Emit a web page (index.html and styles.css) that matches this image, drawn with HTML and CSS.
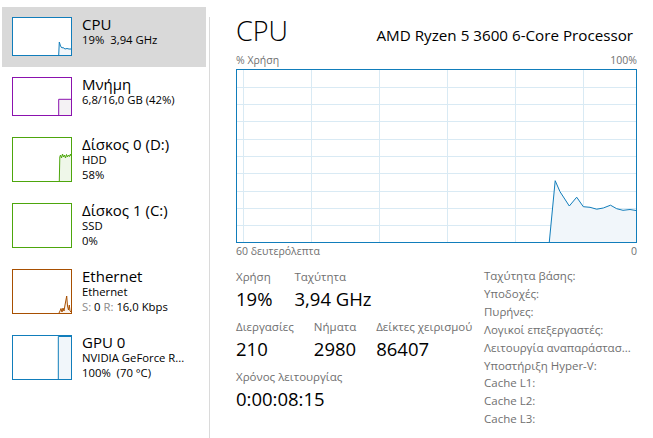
FILE: index.html
```html
<!DOCTYPE html>
<html lang="el">
<head>
<meta charset="utf-8">
<title>Διαχείριση εργασιών - CPU</title>
<link rel="stylesheet" href="styles.css">
</head>
<body>
<div class="app">
  <nav class="sidebar">
    <div class="item selected">
      <div class="thumb cpu">
        <svg viewBox="0 0 58 37" preserveAspectRatio="none">
          <polygon class="fill" points="45.7,37 46.3,24 47.5,28 49,30 50,29.5 52,31 54,30.5 56,31 58,31 58,37"/>
          <polyline class="line" points="45.7,37 46.3,24 47.5,28 49,30 50,29.5 52,31 54,30.5 56,31 58,31"/>
        </svg>
      </div>
      <div class="info">
        <div class="title">CPU</div>
        <div class="sub">19%<span class="sp"></span>3,94 GHz</div>
      </div>
    </div>
    <div class="item">
      <div class="thumb mem">
        <svg viewBox="0 0 58 37" preserveAspectRatio="none">
          <polygon class="fill" points="45.7,37 45.7,21.3 58,21.3 58,37"/>
          <polyline class="line" points="45.7,37 45.7,21.3 58,21.3"/>
        </svg>
      </div>
      <div class="info">
        <div class="title">Μνήμη</div>
        <div class="sub">6,8/16,0 GB (42%)</div>
      </div>
    </div>
    <div class="item">
      <div class="thumb disk">
        <svg viewBox="0 0 58 43" preserveAspectRatio="none">
          <polygon class="fill" points="46.3,43 46.8,19 47.5,17 48.5,20 49.5,16 50.5,19 51.5,17 52.5,20 53.5,16.5 54.5,19 55.5,17 56.5,18.5 57.5,16 58,18 58,43"/>
          <polyline class="line" points="46.3,43 46.8,19 47.5,17 48.5,20 49.5,16 50.5,19 51.5,17 52.5,20 53.5,16.5 54.5,19 55.5,17 56.5,18.5 57.5,16 58,18"/>
        </svg>
      </div>
      <div class="info">
        <div class="title">Δίσκος 0 (D:)</div>
        <div class="sub">HDD</div>
        <div class="sub">58%</div>
      </div>
    </div>
    <div class="item">
      <div class="thumb disk"></div>
      <div class="info">
        <div class="title">Δίσκος 1 (C:)</div>
        <div class="sub">SSD</div>
        <div class="sub">0%</div>
      </div>
    </div>
    <div class="item">
      <div class="thumb eth">
        <svg viewBox="0 0 58 43" preserveAspectRatio="none">
          <polygon class="fill" points="46,43 47,41 48,38.5 49,42 50,38 51,41 52,35 53.7,26 54.5,36 55.5,40 56.3,35 57,41 58,42 58,43"/>
          <polyline class="line" points="46,43 47,41 48,38.5 49,42 50,38 51,41 52,35 53.7,26 54.5,36 55.5,40 56.3,35 57,41 58,42"/>
        </svg>
      </div>
      <div class="info">
        <div class="title">Ethernet</div>
        <div class="sub">Ethernet</div>
        <div class="sub"><span class="dim">S:</span> 0 <span class="dim">R:</span> 16,0 Kbps</div>
      </div>
    </div>
    <div class="item">
      <div class="thumb gpu">
        <svg viewBox="0 0 58 43" preserveAspectRatio="none">
          <polygon class="fill" points="45.3,43 45.3,0.5 58,0.5 58,43"/>
          <polyline class="line" points="45.3,43 45.3,0.5 58,0.5"/>
        </svg>
      </div>
      <div class="info">
        <div class="title">GPU 0</div>
        <div class="sub">NVIDIA GeForce R...</div>
        <div class="sub">100%&nbsp; (70 °C)</div>
      </div>
    </div>
  </nav>
  <div class="divider"></div>
  <main class="main">
    <header class="head">
      <h1 class="big">CPU</h1>
      <div class="model">AMD Ryzen 5 3600 6-Core Processor</div>
    </header>
    <div class="axis top"><span>% Χρήση</span><span>100%</span></div>
    <div class="graph">
      <svg viewBox="0 0 399 172" preserveAspectRatio="none">
        <g class="grid">
          <line x1="6.5" y1="0" x2="6.5" y2="172"/>
          <line x1="74.5" y1="0" x2="74.5" y2="172"/>
          <line x1="142.5" y1="0" x2="142.5" y2="172"/>
          <line x1="210.5" y1="0" x2="210.5" y2="172"/>
          <line x1="278.5" y1="0" x2="278.5" y2="172"/>
          <line x1="346.5" y1="0" x2="346.5" y2="172"/>
          <line x1="0" y1="17.5" x2="399" y2="17.5"/>
          <line x1="0" y1="34.5" x2="399" y2="34.5"/>
          <line x1="0" y1="51.5" x2="399" y2="51.5"/>
          <line x1="0" y1="69.5" x2="399" y2="69.5"/>
          <line x1="0" y1="86.5" x2="399" y2="86.5"/>
          <line x1="0" y1="103.5" x2="399" y2="103.5"/>
          <line x1="0" y1="121.5" x2="399" y2="121.5"/>
          <line x1="0" y1="138.5" x2="399" y2="138.5"/>
          <line x1="0" y1="155.5" x2="399" y2="155.5"/>
        </g>
        <polygon class="fill" points="312.3,172 318.2,110.7 323,121.7 332.3,136 339.7,127.2 346.3,136.7 353,137.3 359.7,139.2 366.3,138 373.5,135.2 379.7,138.7 386,140.3 393,139.5 399,140.5 399,172"/>
        <polyline class="line" points="312.3,172 318.2,110.7 323,121.7 332.3,136 339.7,127.2 346.3,136.7 353,137.3 359.7,139.2 366.3,138 373.5,135.2 379.7,138.7 386,140.3 393,139.5 399,140.5"/>
      </svg>
    </div>
    <div class="axis bottom"><span>60 δευτερόλεπτα</span><span>0</span></div>
    <section class="stats">
      <div class="dyn">
        <div class="row">
          <div class="stat"><div class="lbl">Χρήση</div><div class="val">19%</div></div>
          <div class="stat"><div class="lbl">Ταχύτητα</div><div class="val">3,94 GHz</div></div>
        </div>
        <div class="row">
          <div class="stat"><div class="lbl">Διεργασίες</div><div class="val">210</div></div>
          <div class="stat"><div class="lbl">Νήματα</div><div class="val">2980</div></div>
          <div class="stat"><div class="lbl">Δείκτες χειρισμού</div><div class="val">86407</div></div>
        </div>
        <div class="row">
          <div class="stat"><div class="lbl">Χρόνος λειτουργίας</div><div class="val">0:00:08:15</div></div>
        </div>
      </div>
      <ul class="specs">
        <li>Ταχύτητα βάσης:</li>
        <li>Υποδοχές:</li>
        <li>Πυρήνες:</li>
        <li>Λογικοί επεξεργαστές:</li>
        <li>Λειτουργία αναπαράστασ...</li>
        <li>Υποστήριξη Hyper-V:</li>
        <li>Cache L1:</li>
        <li>Cache L2:</li>
        <li>Cache L3:</li>
      </ul>
    </section>
  </main>
</div>
</body>
</html>
```
FILE: styles.css
```css
html, body {
  margin: 0;
  padding: 0;
  background: #ffffff;
}
body {
  font-family: "Open Sans", "Noto Sans", "DejaVu Sans", sans-serif;
  color: #000;
  width: 653px;
  height: 438px;
  overflow: hidden;
}
.app {
  display: flex;
  height: 438px;
}
.sidebar {
  width: 204px;
  padding: 7px 0 0 2px;
  flex: none;
}
.divider {
  flex: none;
  width: 1px;
  margin: 17px 0 0 3px;
  background: #dadada;
}
.item {
  display: flex;
  align-items: stretch;
  padding: 10px 0 11px 10px;
  gap: 10px;
}
.item.selected {
  background: #d9d9d9;
}
.thumb {
  flex: none;
  width: 58px;
  min-height: 37px;
  border: 1px solid;
  background: #fff;
  position: relative;
}
.thumb svg {
  position: absolute;
  left: 0;
  top: 0;
  width: 100%;
  height: 100%;
  display: block;
}
.thumb .line { fill: none; stroke-width: 1; }
.thumb.cpu, .thumb.gpu { border-color: #117dbb; }
.thumb.cpu .line, .thumb.gpu .line { stroke: #117dbb; }
.thumb.cpu .fill, .thumb.gpu .fill { fill: #f1f6fa; }
.thumb.mem { border-color: #8b12ae; }
.thumb.mem .line { stroke: #8b12ae; }
.thumb.mem .fill { fill: #f4f2f4; }
.thumb.disk { border-color: #4da60c; }
.thumb.disk .line { stroke: #4da60c; }
.thumb.disk .fill { fill: #eff7e9; }
.thumb.eth { border-color: #a74f01; }
.thumb.eth .line { stroke: #a74f01; }
.thumb.eth .fill { fill: #fcf3eb; }

.info {
  white-space: nowrap;
}
.title {
  font-size: 15px;
  line-height: 15px;
}
.sub {
  font-size: 11.3px;
  line-height: 15px;
}
.sp { display: inline-block; width: 6px; }
.dim { color: #8a8a8a; }

.main {
  flex: 1;
  padding: 14px 16px 0 26px;
}
.head {
  display: flex;
  justify-content: space-between;
  align-items: baseline;
  padding-right: 4px;
  height: 34px;
}
.big {
  margin: 0;
  font-size: 27px;
  font-weight: 300;
  line-height: 34px;
}
.model {
  font-size: 15.2px;
}
.axis {
  display: flex;
  justify-content: space-between;
  font-size: 10.5px;
  line-height: 13px;
  color: #707070;
}
.axis.top { margin-top: 6px; margin-bottom: 2px; }
.axis.bottom { margin-top: 2px; }
.graph {
  height: 172px;
  border: 1px solid #117dbb;
}
.graph svg {
  display: block;
  width: 100%;
  height: 100%;
}
.graph .grid line { stroke: #d9eaf4; stroke-width: 1; }
.graph .fill { fill: #f1f6fa; }
.graph .line { fill: none; stroke: #117dbb; stroke-width: 1; }

.stats {
  display: flex;
  margin-top: 11px;
}
.dyn {
  width: 248px;
  flex: none;
}
.row {
  display: flex;
  gap: 20px;
  height: 50px;
}
.row:first-child {
  gap: 22px;
}
.lbl {
  font-size: 11.5px;
  line-height: 15px;
  color: #707070;
  white-space: nowrap;
}
.val {
  font-size: 18.5px;
  line-height: 22px;
  margin-top: 3.5px;
  white-space: nowrap;
}
.specs {
  list-style: none;
  margin: -2px 0 0 0;
  padding: 0;
  font-size: 11.5px;
  line-height: 17.9px;
  color: #707070;
  white-space: nowrap;
}
```
